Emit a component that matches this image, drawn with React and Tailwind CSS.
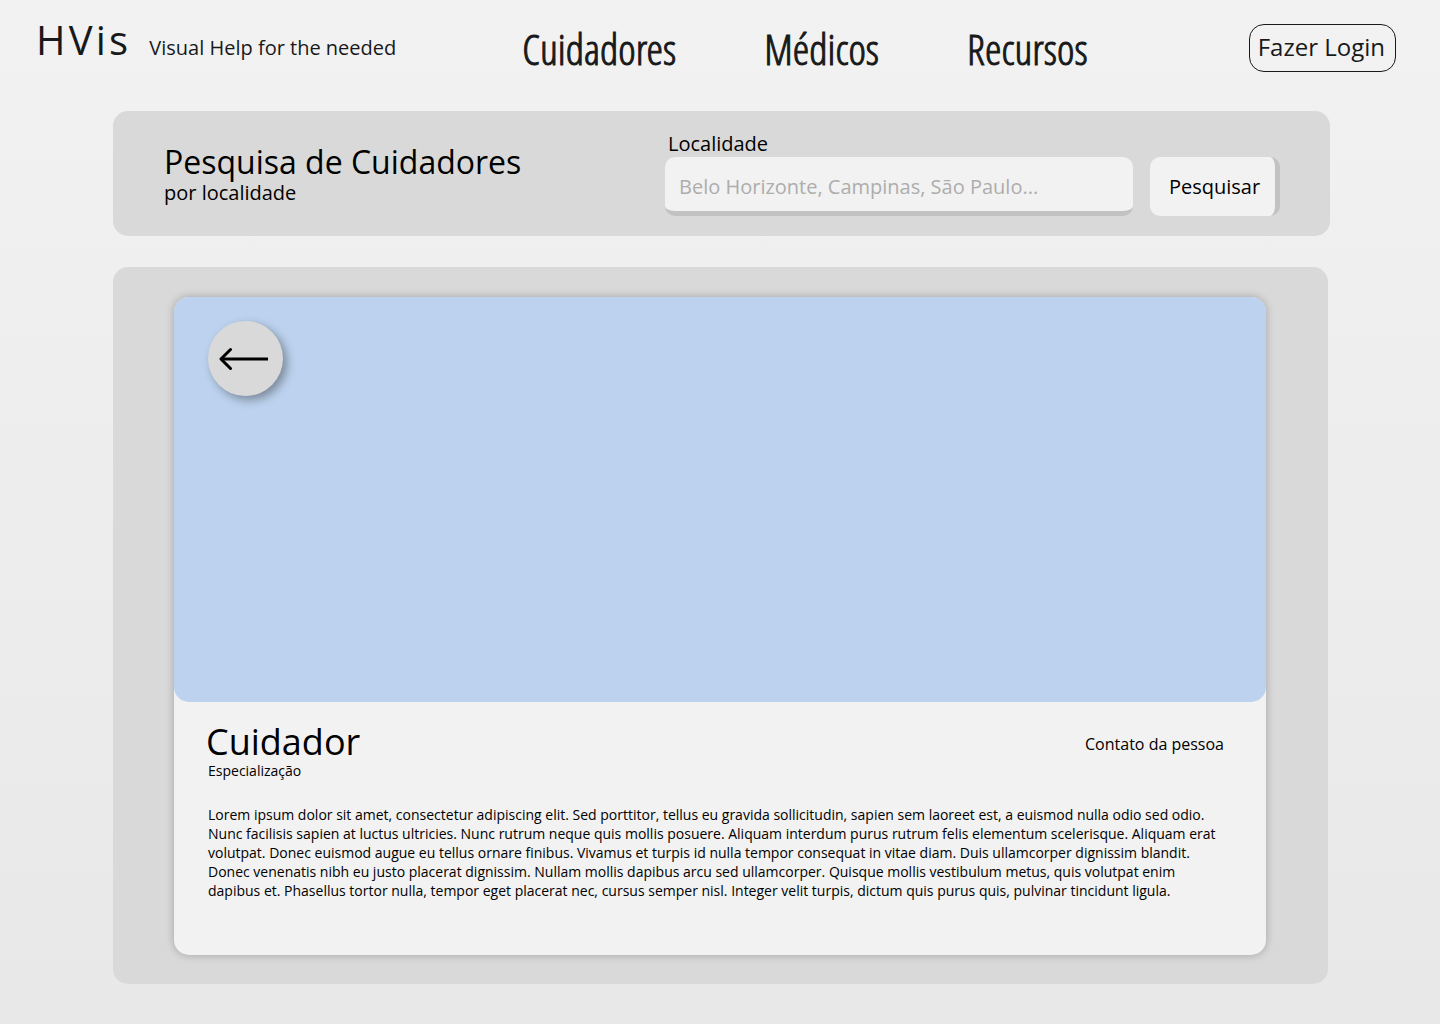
const navItems = ["Cuidadores", "Médicos", "Recursos"];

function BackArrow() {
  return (
    <svg
      width="50"
      height="24"
      viewBox="0 0 50 24"
      fill="none"
      stroke="black"
      strokeWidth="3"
      aria-hidden="true"
    >
      <path d="M2 12H49" />
      <path d="M11.5 2.5L2 12L11.5 21.5" strokeLinecap="round" strokeLinejoin="round" />
    </svg>
  );
}

function Header() {
  return (
    <header className="flex items-start pt-6 pr-11 pl-9 text-[#18191a]">
      <div className="flex items-baseline gap-[18px]">
        <a href="#" className="text-[40px] leading-8 tracking-[0.08em]">
          HVis
        </a>
        <p className="text-xl">Visual Help for the needed</p>
      </div>
      <nav className="mr-auto ml-[126px] flex gap-[88px] font-['Open_Sans_Condensed_Light','Roboto_Condensed',sans-serif] text-[42px] leading-[50px] [-webkit-text-stroke:1px_#18191a]">
        {navItems.map((item) => (
          <a key={item} href="#">
            {item}
          </a>
        ))}
      </nav>
      <button
        type="button"
        className="h-12 rounded-[15px] border border-[#18191a] pr-2.5 pb-0.5 pl-2 text-2xl"
      >
        Fazer Login
      </button>
    </header>
  );
}

function SearchPanel() {
  return (
    <section className="flex justify-between rounded-[15px] bg-[#d9d9d9] pt-5 pr-[50px] pb-5 pl-[51px]">
      <div className="pt-[11px]">
        <h1 className="text-[32px] leading-10">Pesquisa de Cuidadores</h1>
        <p className="text-xl leading-[22px]">por localidade</p>
      </div>
      <form className="flex w-[615px] items-end gap-[17px]">
        <div className="flex flex-1 flex-col">
          <label htmlFor="localidade" className="pl-[3px] text-xl leading-[26px]">
            Localidade
          </label>
          <input
            id="localidade"
            type="text"
            placeholder="Belo Horizonte, Campinas, São Paulo..."
            className="h-[59px] w-full rounded-[10px] border-b-[5px] border-[#c2c2c2] bg-[#f2f2f2] px-3.5 pt-[5px] text-xl outline-none placeholder:text-[#adadad]"
          />
        </div>
        <button
          type="button"
          className="h-[59px] w-[130px] rounded-[10px] border-r-[5px] border-[#c2c2c2] bg-[#f2f2f2] pl-1 text-xl"
        >
          Pesquisar
        </button>
      </form>
    </section>
  );
}

function CaregiverCard() {
  return (
    <article className="rounded-[15px] bg-[#f2f2f2] pb-[55px] shadow-[0_0_8px_rgba(0,0,0,0.25)]">
      <div className="h-[405px] rounded-[15px] bg-[#bcd2ee] pt-6 pl-[34px]">
        <button
          type="button"
          aria-label="Voltar"
          className="flex size-[75px] items-center rounded-full bg-[#d9d9d9] pl-[11px] shadow-[4px_4px_10px_rgba(0,0,0,0.35)]"
        >
          <BackArrow />
        </button>
      </div>
      <div className="pr-[42px] pl-[34px]">
        <div className="flex items-start justify-between pt-[21px]">
          <div>
            <h2 className="-ml-0.5 text-4xl leading-[38px]">Cuidador</h2>
            <p className="text-sm leading-[19px]">Especialização</p>
          </div>
          <a href="#" className="pt-2.5 text-base leading-[22px]">
            Contato da pessoa
          </a>
        </div>
        <p className="pt-[25px] text-sm leading-[19px]">
          Lorem ipsum dolor sit amet, consectetur adipiscing elit. Sed porttitor, tellus eu gravida
          sollicitudin, sapien sem laoreet est, a euismod nulla odio sed odio. Nunc facilisis sapien
          at luctus ultricies. Nunc rutrum neque quis mollis posuere. Aliquam interdum purus rutrum
          felis elementum scelerisque. Aliquam erat volutpat. Donec euismod augue eu tellus ornare
          finibus. Vivamus et turpis id nulla tempor consequat in vitae diam. Duis ullamcorper
          dignissim blandit. Donec venenatis nibh eu justo placerat dignissim. Nullam mollis dapibus
          arcu sed ullamcorper. Quisque mollis vestibulum metus, quis volutpat enim dapibus et.
          Phasellus tortor nulla, tempor eget placerat nec, cursus semper nisl. Integer velit
          turpis, dictum quis purus quis, pulvinar tincidunt ligula.
        </p>
      </div>
    </article>
  );
}

export default function App() {
  return (
    <div className="min-h-screen bg-linear-to-b from-[#f2f2f2] to-[#e8e8e8] font-['Open_Sans',sans-serif] text-black">
      <Header />
      <main className="flex flex-col gap-[31px] pt-[37px] pr-[110px] pb-10 pl-[113px]">
        <SearchPanel />
        <section className="mr-0.5 rounded-[15px] bg-[#d9d9d9] pt-[30px] pr-[62px] pb-[29px] pl-[61px]">
          <CaregiverCard />
        </section>
      </main>
    </div>
  );
}
